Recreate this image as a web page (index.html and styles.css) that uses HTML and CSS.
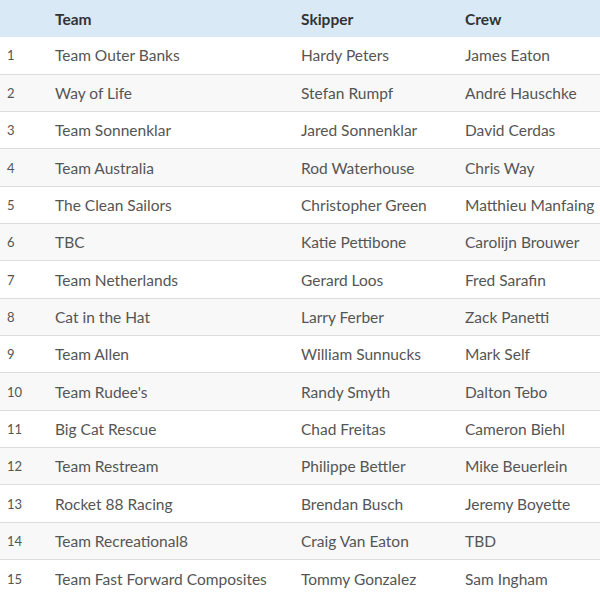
FILE: index.html
```html
<!DOCTYPE html>
<html>
<head>
<meta charset="utf-8">
<link rel="stylesheet" href="styles.css">
</head>
<body>
<table class="roster">
  <colgroup>
    <col class="c-num"><col class="c-team"><col class="c-skip"><col class="c-crew">
  </colgroup>
  <thead>
    <tr><th></th><th>Team</th><th>Skipper</th><th>Crew</th></tr>
  </thead>
  <tbody>
    <tr><td class="num">1</td><td>Team Outer Banks</td><td>Hardy Peters</td><td>James Eaton</td></tr>
    <tr><td class="num">2</td><td>Way of Life</td><td>Stefan Rumpf</td><td>André Hauschke</td></tr>
    <tr><td class="num">3</td><td>Team Sonnenklar</td><td>Jared Sonnenklar</td><td>David Cerdas</td></tr>
    <tr><td class="num">4</td><td>Team Australia</td><td>Rod Waterhouse</td><td>Chris Way</td></tr>
    <tr><td class="num">5</td><td>The Clean Sailors</td><td>Christopher Green</td><td>Matthieu Manfaing</td></tr>
    <tr><td class="num">6</td><td>TBC</td><td>Katie Pettibone</td><td>Carolijn Brouwer</td></tr>
    <tr><td class="num">7</td><td>Team Netherlands</td><td>Gerard Loos</td><td>Fred Sarafin</td></tr>
    <tr><td class="num">8</td><td>Cat in the Hat</td><td>Larry Ferber</td><td>Zack Panetti</td></tr>
    <tr><td class="num">9</td><td>Team Allen</td><td>William Sunnucks</td><td>Mark Self</td></tr>
    <tr><td class="num">10</td><td>Team Rudee's</td><td>Randy Smyth</td><td>Dalton Tebo</td></tr>
    <tr><td class="num">11</td><td>Big Cat Rescue</td><td>Chad Freitas</td><td>Cameron Biehl</td></tr>
    <tr><td class="num">12</td><td>Team Restream</td><td>Philippe Bettler</td><td>Mike Beuerlein</td></tr>
    <tr><td class="num">13</td><td>Rocket 88 Racing</td><td>Brendan Busch</td><td>Jeremy Boyette</td></tr>
    <tr><td class="num">14</td><td>Team Recreational8</td><td>Craig Van Eaton</td><td>TBD</td></tr>
    <tr><td class="num">15</td><td>Team Fast Forward Composites</td><td>Tommy Gonzalez</td><td>Sam Ingham</td></tr>
  </tbody>
</table>
</body>
</html>
```

FILE: styles.css
```css
html, body {
  margin: 0;
  padding: 0;
  background: #fff;
  overflow: hidden;
}
.roster {
  width: 620px;
  table-layout: fixed;
  border-collapse: collapse;
  font-family: Lato, "Open Sans", sans-serif;
  font-size: 15.5px;
  color: #555;
}
.c-num { width: 47px; }
.c-team { width: 246px; }
.c-skip { width: 164px; }
.c-crew { width: 163px; }
.roster th {
  background: #d9eaf6;
  color: #333;
  font-weight: 700;
  text-align: left;
  height: 37px;
  padding: 0 8px;
  box-sizing: border-box;
}
.roster td {
  height: 37.33px;
  padding: 0 8px;
  border-top: 1px solid #dddddd;
  box-sizing: border-box;
  white-space: nowrap;
}
.roster tbody tr:first-child td { border-top: none; }
.roster tbody tr:nth-child(even) { background: #f8f8f8; }
.roster td.num {
  font-size: 13px;
  padding-left: 7px;
}
```
